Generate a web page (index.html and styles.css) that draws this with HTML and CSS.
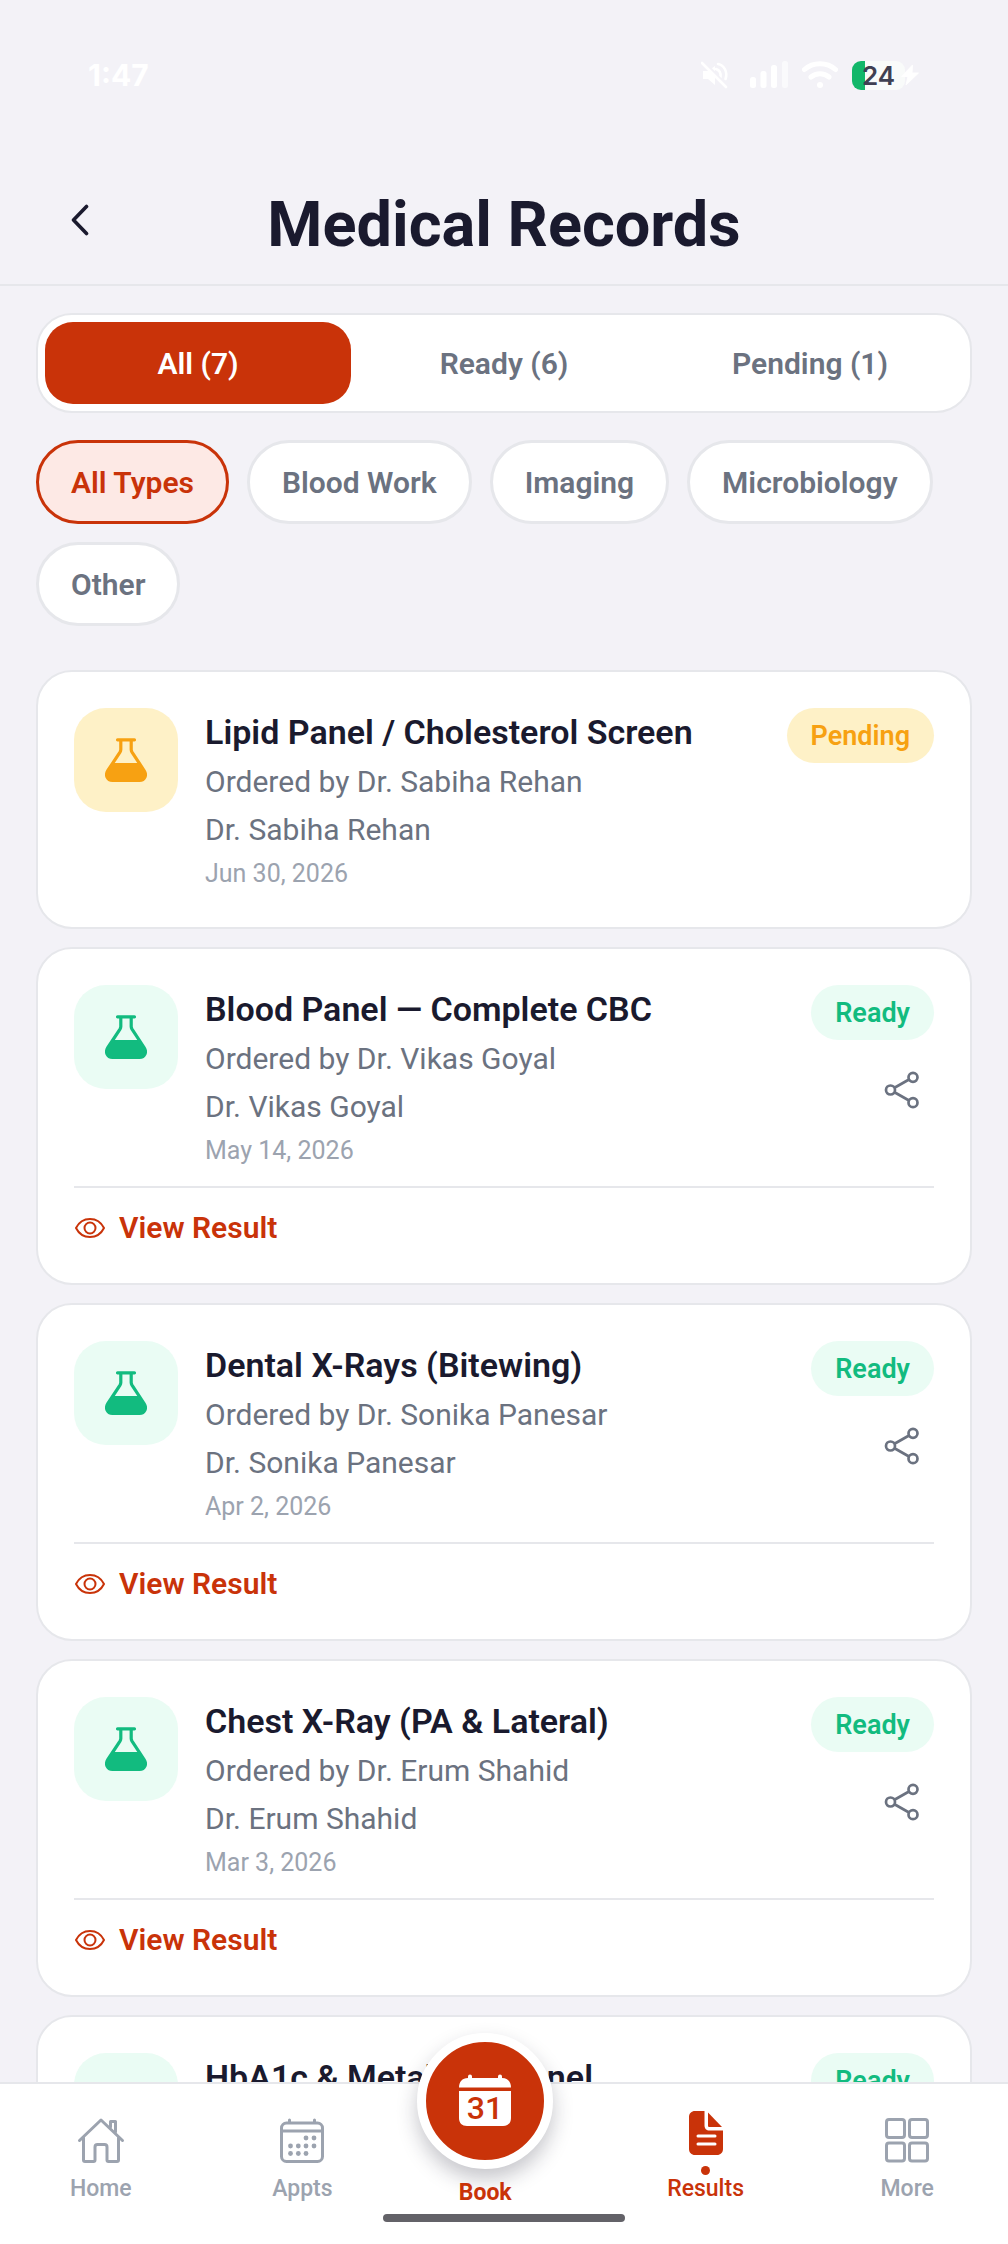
FILE: index.html
```html
<!DOCTYPE html>
<html lang="en">
<head>
<meta charset="utf-8">
<meta name="viewport" content="width=device-width, initial-scale=1">
<title>Medical Records</title>
<link rel="stylesheet" href="styles.css">
</head>
<body>
<svg class="sprite" aria-hidden="true">
  <symbol id="flask" viewBox="0 0 42 44">
    <path d="M12.500 1.800h17M15.800 2v9.500c0 1-.3 1.800-.8 2.600L2.900 32.500C0 37 2 42.300 7.500 42.300h27c5.500 0 7.500-5.300 4.600-9.800L27 14.100c-.5-.8-.8-1.600-.8-2.600V2" fill="none" stroke="currentColor" stroke-width="3.200" stroke-linecap="round"/>
    <path d="M9 25h24l6.500 9.500c2 4-.5 8-5 8h-27c-4.500 0-7-4-5-8z" fill="currentColor"/>
  </symbol>
  <symbol id="share" viewBox="0 0 36 38">
    <g fill="none" stroke="currentColor" stroke-width="2.700">
      <circle cx="6.500" cy="19" r="4.500"/><circle cx="29" cy="6.300" r="4.500"/><circle cx="29" cy="31.700" r="4.500"/>
      <path d="M10.500 16.700l14.500-8.200M10.500 21.300l14.500 8.200"/>
    </g>
  </symbol>
  <symbol id="eye" viewBox="0 0 32 22">
    <g fill="none" stroke="currentColor" stroke-width="2">
      <path d="M2 11C5 5 10 2 16 2s11 3 14 9c-3 6-8 9-14 9S5 17 2 11z" stroke-linejoin="round"/><circle cx="16" cy="11" r="5.500"/>
    </g>
  </symbol>
</svg>

<div class="app">
  <div class="status">
    <span class="clock">1:47</span>
    <div class="indicators">
      <svg width="28" height="28" viewBox="0 0 28 28"><path d="M2 10v8h5l7 6V5L7 10z" fill="#fff"/><path d="M17 3c6 1 10 8 7.500 15M15 8c3 1 5 4 4.500 8" fill="none" stroke="#fff" stroke-width="2.600" stroke-linecap="round"/><path d="M3 1l24 25" stroke="#f3f2f7" stroke-width="3"/><path d="M1 2l24 24" stroke="#fff" stroke-width="2.600" stroke-linecap="round"/></svg>
      <svg width="38" height="28" viewBox="0 0 38 28" fill="#fff"><rect x="0" y="16" width="6" height="11" rx="2.500"/><rect x="10.500" y="10" width="6" height="17" rx="2.500"/><rect x="21" y="4" width="6" height="23" rx="2.500"/><rect x="32" y="0" width="6" height="27" rx="2.500" opacity=".6"/></svg>
      <svg width="36" height="28" viewBox="0 0 36 28" fill="none" stroke="#fff" stroke-width="5" stroke-linecap="round"><path d="M2.500 8.500C11 .8 25 .8 33.500 8.500M9 16c5-4.300 13-4.300 18 0"/><circle cx="18" cy="24" r="3" fill="#fff" stroke="none"/></svg>
      <div class="power">
        <span class="battery">24</span>
        <svg class="bolt" width="20" height="22" viewBox="0 0 20 22"><path d="M12.500 1L1.500 12.500h6.500L6 21 18.500 9H12z" fill="#fff" stroke="#fff" stroke-linejoin="round"/></svg>
      </div>
    </div>
  </div>

  <header class="header">
    <button class="back" type="button" aria-label="Back">
      <svg width="18" height="32" viewBox="0 0 18 32"><path d="M15.500 2.500L2.500 16l13 13.500" fill="none" stroke="currentColor" stroke-width="3.600" stroke-linecap="round" stroke-linejoin="round"/></svg>
    </button>
    <h1>Medical Records</h1>
  </header>

  <main class="content">
    <div class="segments">
      <button class="segment active" type="button">All (7)</button>
      <button class="segment" type="button">Ready (6)</button>
      <button class="segment" type="button">Pending (1)</button>
    </div>

    <div class="chips">
      <button class="chip active" type="button">All Types</button>
      <button class="chip" type="button">Blood Work</button>
      <button class="chip" type="button">Imaging</button>
      <button class="chip" type="button">Microbiology</button>
      <button class="chip" type="button">Other</button>
    </div>

    <div class="records">
      <article class="card pending">
        <div class="summary">
          <div class="tile"><svg class="flask"><use href="#flask"/></svg></div>
          <div class="details">
            <h2>Lipid Panel / Cholesterol Screen</h2>
            <p>Ordered by Dr. Sabiha Rehan</p>
            <p>Dr. Sabiha Rehan</p>
            <time>Jun 30, 2026</time>
          </div>
          <div class="side"><span class="badge">Pending</span></div>
        </div>
      </article>

      <article class="card ready">
        <div class="summary">
          <div class="tile"><svg class="flask"><use href="#flask"/></svg></div>
          <div class="details">
            <h2>Blood Panel — Complete CBC</h2>
            <p>Ordered by Dr. Vikas Goyal</p>
            <p>Dr. Vikas Goyal</p>
            <time>May 14, 2026</time>
          </div>
          <div class="side">
            <span class="badge">Ready</span>
            <button class="share" type="button" aria-label="Share"><svg class="share-icon"><use href="#share"/></svg></button>
          </div>
        </div>
        <a class="view" href="#"><svg class="eye"><use href="#eye"/></svg>View Result</a>
      </article>

      <article class="card ready">
        <div class="summary">
          <div class="tile"><svg class="flask"><use href="#flask"/></svg></div>
          <div class="details">
            <h2>Dental X-Rays (Bitewing)</h2>
            <p>Ordered by Dr. Sonika Panesar</p>
            <p>Dr. Sonika Panesar</p>
            <time>Apr 2, 2026</time>
          </div>
          <div class="side">
            <span class="badge">Ready</span>
            <button class="share" type="button" aria-label="Share"><svg class="share-icon"><use href="#share"/></svg></button>
          </div>
        </div>
        <a class="view" href="#"><svg class="eye"><use href="#eye"/></svg>View Result</a>
      </article>

      <article class="card ready">
        <div class="summary">
          <div class="tile"><svg class="flask"><use href="#flask"/></svg></div>
          <div class="details">
            <h2>Chest X-Ray (PA &amp; Lateral)</h2>
            <p>Ordered by Dr. Erum Shahid</p>
            <p>Dr. Erum Shahid</p>
            <time>Mar 3, 2026</time>
          </div>
          <div class="side">
            <span class="badge">Ready</span>
            <button class="share" type="button" aria-label="Share"><svg class="share-icon"><use href="#share"/></svg></button>
          </div>
        </div>
        <a class="view" href="#"><svg class="eye"><use href="#eye"/></svg>View Result</a>
      </article>

      <article class="card ready">
        <div class="summary">
          <div class="tile"><svg class="flask"><use href="#flask"/></svg></div>
          <div class="details">
            <h2>HbA1c &amp; Metabolic Panel</h2>
          </div>
          <div class="side"><span class="badge">Ready</span></div>
        </div>
      </article>
    </div>
  </main>

  <nav class="tabbar">
    <div class="tabs">
      <a class="tab" href="#">
        <svg width="48" height="46" viewBox="0 0 48 46" fill="none" stroke="currentColor" stroke-width="3" stroke-linecap="round" stroke-linejoin="round"><path d="M2.500 23.500L24 3l21.500 20.500M6.500 20.500V43c0 1 .5 1.500 1.500 1.500h8.500c1 0 1.500-.5 1.500-1.500V30c0-1.500 1-2.500 2.500-2.500h7c1.500 0 2.500 1 2.500 2.500v13c0 1 .5 1.500 1.500 1.500H40c1 0 1.500-.5 1.500-1.500V20.500M33.500 10V4.500h5V15"/></svg>
        Home
      </a>
      <a class="tab" href="#">
        <svg width="44" height="46" viewBox="0 0 44 46" fill="none" stroke="currentColor" stroke-width="3" stroke-linecap="round"><rect x="1.500" y="6" width="41" height="38.500" rx="5"/><path d="M2 14h40M9.500 3v2M34.500 3v2"/><g fill="currentColor" stroke="none"><circle cx="26" cy="21" r="2.400"/><circle cx="34" cy="21" r="2.400"/><circle cx="10.500" cy="29" r="2.400"/><circle cx="18.300" cy="29" r="2.400"/><circle cx="26" cy="29" r="2.400"/><circle cx="34" cy="29" r="2.400"/><circle cx="10.500" cy="36.500" r="2.400"/><circle cx="18.300" cy="36.500" r="2.400"/><circle cx="26" cy="36.500" r="2.400"/></g></svg>
        Appts
      </a>
      <a class="tab book" href="#">
        <span class="disc">
          <svg width="54" height="54" viewBox="0 0 54 54" fill="#fff"><path d="M10 4V2.500a2 2 0 0 1 4 0V4h26V2.500a2 2 0 0 1 4 0V4c6 0 9 4 9 9.500H1C1 8 4 4 10 4zM1 17h52v27c0 5-3 8-8 8H9c-5 0-8-3-8-8z"/><text class="day" x="27" y="45" text-anchor="middle">31</text></svg>
        </span>
        Book
      </a>
      <a class="tab current" href="#">
        <svg width="36" height="46" viewBox="0 0 36 46" fill="currentColor"><path d="M7 1h9.500v14.500c0 3 2 5 5 5H35V39c0 3.500-2.500 6-6 6H7c-3.500 0-6-2.500-6-6V7c0-3.500 2.500-6 6-6z"/><path d="M20 2.500L34 17H21.500c-1 0-1.500-.5-1.500-1.500z"/><path d="M10 26h17M10 34h17" stroke="#fff" stroke-width="3" stroke-linecap="round"/></svg>
        <i class="dot"></i>
        Results
      </a>
      <a class="tab" href="#">
        <svg width="44" height="46" viewBox="0 0 44 46" fill="none" stroke="currentColor" stroke-width="3"><rect x="1.500" y="2.500" width="18" height="18" rx="2.500"/><rect x="24.500" y="2.500" width="18" height="18" rx="2.500"/><rect x="1.500" y="26" width="18" height="18" rx="2.500"/><rect x="24.500" y="26" width="18" height="18" rx="2.500"/></svg>
        More
      </a>
    </div>
    <div class="home-indicator"></div>
  </nav>
</div>
</body>
</html>
```
FILE: styles.css
```css
:root {
  --bg: #f3f2f7;
  --line: #e6e7eb;
  --ink: #1a1a2e;
  --gray: #6b7280;
  --muted: #9ca3af;
  --brand: #c93309;
}
* { box-sizing: border-box; }
body {
  margin: 0;
  background: var(--bg);
  color: var(--ink);
  font-family: Roboto, "Liberation Sans", sans-serif;
}
button { font: inherit; color: inherit; border: 0; background: none; padding: 0; cursor: pointer; }
a { color: inherit; text-decoration: none; }
h1, h2, p { margin: 0; }
svg { display: block; }
.sprite { width: 0; height: 0; position: absolute; }

.app { height: 100vh; display: flex; flex-direction: column; overflow: hidden; }

.status {
  flex: none;
  height: 150px;
  padding: 0 88px;
  display: flex;
  align-items: center;
  justify-content: space-between;
}
.clock { font: 700 30px/40px Inter, sans-serif; color: #fff; }
.indicators { display: flex; align-items: center; gap: 14px; }
.indicators > svg:nth-child(2) { margin-left: 7px; }
.power { display: flex; align-items: center; }
.battery {
  width: 53px;
  border-radius: 9px;
  background: linear-gradient(to right, #12b76a 13px, #f9fbfa 13px);
  color: #404052;
  font: 600 26px/29px Inter, sans-serif;
  text-align: center;
}
.bolt { margin-left: -5px; }

.header {
  flex: none;
  display: grid;
  grid-template-columns: 88px 1fr 88px;
  align-items: start;
  padding: 26px 36px 10px;
  border-bottom: 2px solid var(--line);
}
.back { height: 88px; display: grid; place-items: center; }
.header h1 { font-size: 63px; line-height: 98px; font-weight: 700; text-align: center; white-space: nowrap; }

.content {
  flex: 1;
  min-height: 0;
  overflow-y: auto;
  scrollbar-width: none;
  padding: 27px 36px 0;
}
.segments {
  display: grid;
  grid-template-columns: repeat(3, 1fr);
  padding: 7px;
  border: 2px solid var(--line);
  border-radius: 36px;
  background: #fff;
}
.segment {
  height: 82px;
  border-radius: 28px;
  color: var(--gray);
  font-size: 30px;
  font-weight: 600;
}
.segment.active { background: var(--brand); color: #fff; }

.chips { display: flex; flex-wrap: wrap; gap: 18px; margin: 27px 0 44px; }
.chip {
  height: 84px;
  padding: 0 32px;
  border: 3px solid var(--line);
  border-radius: 42px;
  background: #fff;
  color: var(--gray);
  font-size: 30px;
  font-weight: 600;
}
.chip.active { border-color: var(--brand); background: #fde9e5; color: var(--brand); }

.records { display: flex; flex-direction: column; gap: 18px; }
.card { padding: 36px; border: 2px solid var(--line); border-radius: 36px; background: #fff; }
.pending { --tone: #f7a112; --tint: #fef1c7; }
.ready { --tone: #12bb7f; --tint: #eafcf4; }
.summary { display: flex; align-items: flex-start; }
.tile {
  flex: none;
  width: 104px;
  height: 104px;
  border-radius: 32px;
  display: grid;
  place-items: center;
  background: var(--tint);
  color: var(--tone);
}
.flask { width: 42px; height: 44px; }
.details { flex: 1; margin-left: 27px; color: var(--gray); }
.details h2 { padding-bottom: 2px; font-size: 34px; line-height: 48px; font-weight: 600; color: var(--ink); }
.details p { font-size: 30px; line-height: 48px; }
.details time { display: block; margin-top: 3px; font-size: 25px; line-height: 34px; color: var(--muted); }
.side { display: flex; flex-direction: column; align-items: flex-end; gap: 18px; }
.badge {
  padding: 2px 24px 0;
  border-radius: 28px;
  background: var(--tint);
  color: var(--tone);
  font-size: 27px;
  line-height: 53px;
  font-weight: 600;
}
.share { width: 64px; height: 64px; display: grid; place-items: center; color: var(--gray); }
.share-icon { width: 36px; height: 38px; }
.view {
  display: flex;
  align-items: center;
  gap: 13px;
  margin-top: 18px;
  padding-top: 20px;
  border-top: 2px solid var(--line);
  color: var(--brand);
  font-size: 30px;
  line-height: 39px;
  font-weight: 600;
}
.eye { width: 32px; height: 22px; }

.tabbar {
  flex: none;
  position: relative;
  padding-bottom: 22px;
  border-top: 2px solid var(--line);
  background: #fff;
}
.tabs { display: grid; grid-template-columns: repeat(5, 1fr); height: 130px; }
.tab {
  display: flex;
  flex-direction: column;
  align-items: center;
  padding-top: 33px;
  gap: 12px;
  color: var(--muted);
  font-size: 23px;
  line-height: 28px;
  font-weight: 500;
}
.tab.current { padding-top: 26px; gap: 10px; color: var(--brand); }
.dot { width: 9px; height: 9px; border-radius: 50%; background: currentColor; margin-bottom: -10px; }
.tab.book {
  justify-self: start;
  margin: -51px 0 0 14px;
  padding-top: 0;
  gap: 10px;
  color: var(--brand);
  font-weight: 700;
}
.disc {
  width: 136px;
  height: 136px;
  border: 9px solid #fff;
  border-radius: 50%;
  display: grid;
  place-items: center;
  background: var(--brand);
  box-shadow: 0 10px 20px rgba(26, 26, 46, .25);
}
.day { font: 500 32px Roboto, sans-serif; fill: var(--brand); }
.home-indicator { width: 242px; height: 8px; margin: 0 auto; border-radius: 4px; background: #636268; }
```
